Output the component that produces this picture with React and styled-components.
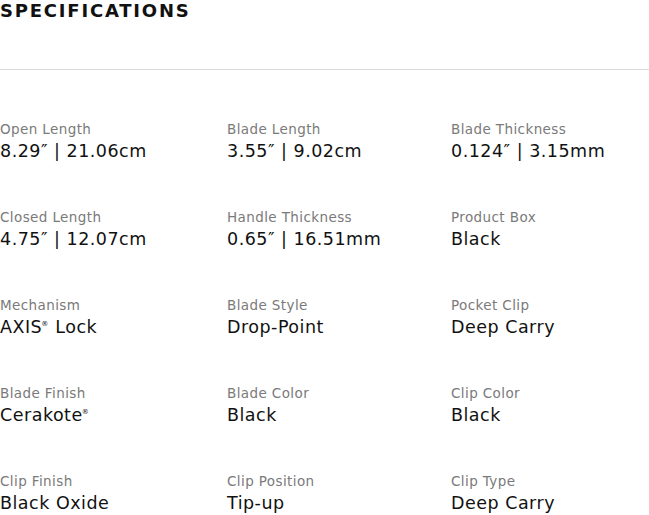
import React from "react";
import styled, { createGlobalStyle } from "styled-components";

const Global = createGlobalStyle`
  html, body { margin: 0; padding: 0; background: #fff; }
  body { font-family: "DejaVu Sans", "Noto Sans", Arial, sans-serif; color: #111; }
`;

const Section = styled.section`
  width: 649px;
`;

const Title = styled.h2`
  margin: 0;
  font-size: 18px;
  line-height: 22px;
  font-weight: 700;
  letter-spacing: 1.8px;
  text-transform: uppercase;
  color: #111;
`;

const Divider = styled.hr`
  margin: 47px 0 0;
  border: 0;
  height: 1px;
  background: #dcdcdc;
`;

const Grid = styled.dl`
  margin: 0;
  padding-top: 50px;
  display: grid;
  grid-template-columns: 227px 224px 1fr;
  row-gap: 46px;
`;

const Item = styled.div`
  display: flex;
  flex-direction: column;
`;

const Label = styled.dt`
  font-size: 13.5px;
  line-height: 18px;
  letter-spacing: 0.4px;
  color: #7a7a7a;
`;

const Value = styled.dd`
  margin: 2px 0 0;
  font-size: 17.5px;
  line-height: 22px;
  letter-spacing: 0.5px;
  color: #111;
`;

const Reg = styled.span`
  font-size: 7px;
  line-height: 0;
  letter-spacing: 0;
  vertical-align: 7px;
  margin-left: -1px;
  margin-right: 1px;
`;

const specs = [
  ["Open Length", "8.29″ | 21.06cm"],
  ["Blade Length", "3.55″ | 9.02cm"],
  ["Blade Thickness", "0.124″ | 3.15mm"],
  ["Closed Length", "4.75″ | 12.07cm"],
  ["Handle Thickness", "0.65″ | 16.51mm"],
  ["Product Box", "Black"],
  ["Mechanism", ["AXIS", "Lock"]],
  ["Blade Style", "Drop-Point"],
  ["Pocket Clip", "Deep Carry"],
  ["Blade Finish", ["Cerakote", ""]],
  ["Blade Color", "Black"],
  ["Clip Color", "Black"],
  ["Clip Finish", "Black Oxide"],
  ["Clip Position", "Tip-up"],
  ["Clip Type", "Deep Carry"],
];

export default function App() {
  return (
    <Section>
      <Global />
      <Title>Specifications</Title>
      <Divider />
      <Grid>
        {specs.map(([label, value]) => (
          <Item key={label}>
            <Label>{label}</Label>
            <Value>
              {Array.isArray(value) ? (
                <>
                  {value[0]}
                  <Reg>®</Reg>
                  {value[1] ? " " + value[1] : ""}
                </>
              ) : (
                value
              )}
            </Value>
          </Item>
        ))}
      </Grid>
    </Section>
  );
}
